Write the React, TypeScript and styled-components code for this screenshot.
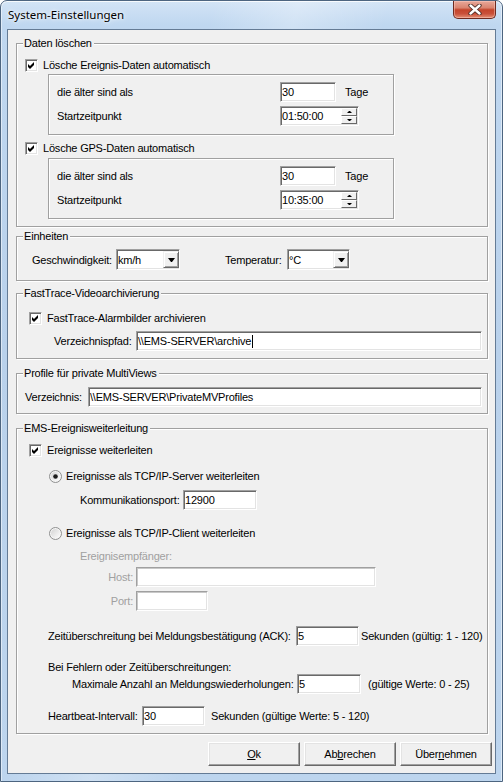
import React from 'react'
import styled, { createGlobalStyle } from 'styled-components'

const GlobalStyle = createGlobalStyle`
  html, body {
    margin: 0;
    padding: 0;
  }
  body {
    width: 503px;
    height: 782px;
    overflow: hidden;
    background: #fff;
  }
`

const Window = styled.div`
  width: 503px;
  height: 782px;
  box-sizing: border-box;
  display: flex;
  flex-direction: column;
  border: 1px solid #4d6580;
  border-radius: 7px 7px 0 0;
  background:
    linear-gradient(105deg, rgba(255, 255, 255, 0) 30%, rgba(255, 255, 255, 0.28) 42%, rgba(255, 255, 255, 0) 55%),
    linear-gradient(180deg, #d3e4f6 0px, #bfd7f0 24px, #b9d1eb 45%, #bdd5ee 100%);
  box-shadow: inset 0 1px 0 rgba(255, 255, 255, 0.8), inset 1px 0 0 rgba(255, 255, 255, 0.5),
    inset -1px 0 0 rgba(255, 255, 255, 0.5);
  font-family: 'Liberation Sans', Arial, sans-serif;
  font-size: 11px;
  letter-spacing: -0.2px;
  color: #000;
`

const TitleBar = styled.div`
  height: 28px;
  flex: none;
  display: flex;
  justify-content: space-between;
  padding: 0 6px 0 7px;
`

const Title = styled.div`
  font-family: 'Noto Sans', 'Open Sans', sans-serif;
  font-size: 11.5px;
  letter-spacing: 0;
  line-height: 28px;
  text-shadow: 0 0 6px rgba(255, 255, 255, 0.9), 0 0 3px rgba(255, 255, 255, 0.9);
`

const CloseButton = styled.div`
  width: 43px;
  height: 18px;
  box-sizing: border-box;
  display: flex;
  align-items: center;
  justify-content: center;
  border: 1px solid #6e2a20;
  border-top: none;
  border-radius: 0 0 5px 5px;
  background: linear-gradient(180deg, #e8a89a 0%, #d98470 40%, #c4442b 52%, #c9503a 75%, #e38f75 100%);
  box-shadow: inset 0 0 0 1px rgba(255, 210, 200, 0.45);
`

const Client = styled.div`
  flex: 1;
  margin: 0 6px 7px;
  border: 1px solid #647b95;
  background: #f0f0f0;
  display: flex;
  flex-direction: column;
`

const Group = styled.div<{ $top: number; $h: number }>`
  position: relative;
  box-sizing: border-box;
  height: ${(p) => p.$h}px;
  margin: ${(p) => p.$top}px 7px 0 8px;
  border: 1px solid #a0a0a0;
  box-shadow: inset 1px 1px 0 #fff, 1px 1px 0 #fff;
  display: flex;
  flex-direction: column;
`

const Legend = styled.span`
  position: absolute;
  top: -7px;
  left: 6px;
  padding: 0 2px 0 1px;
  line-height: 13px;
  background: #f0f0f0;
`

const Body = styled.div<{ $pad: string }>`
  padding: ${(p) => p.$pad};
  display: flex;
  flex-direction: column;
`

const Row = styled.div<{ $top?: number; $indent?: number; $h?: number }>`
  display: flex;
  align-items: center;
  height: ${(p) => p.$h ?? 20}px;
  margin-top: ${(p) => p.$top ?? 0}px;
  padding-left: ${(p) => p.$indent ?? 0}px;
  white-space: nowrap;
`

const Label = styled.span<{ $w?: number; $gap?: number; $right?: boolean; $dim?: boolean }>`
  flex: none;
  width: ${(p) => (p.$w ? `${p.$w}px` : 'auto')};
  margin-left: ${(p) => p.$gap ?? 0}px;
  text-align: ${(p) => (p.$right ? 'right' : 'left')};
  padding-right: ${(p) => (p.$right ? 3 : 0)}px;
  box-sizing: border-box;
  color: ${(p) => (p.$dim ? '#a0a0a0' : '#000')};
`

const Note = styled.span<{ $gap: number }>`
  margin-left: ${(p) => p.$gap}px;
`

const InnerBox = styled.div<{ $top: number }>`
  box-sizing: border-box;
  width: 346px;
  height: 61px;
  margin: ${(p) => p.$top}px 0 0 23px;
  padding: 7px 0 0 8px;
  border: 1px solid #a0a0a0;
  box-shadow: inset 1px 1px 0 #fff, 1px 1px 0 #fff;
  display: grid;
  grid-template-columns: 223px auto;
  grid-auto-rows: 20px;
  row-gap: 4px;
  align-items: center;
  justify-content: start;
`

const Field = styled.div<{ $w?: number; $h?: number; $off?: boolean }>`
  box-sizing: border-box;
  flex: ${(p) => (p.$w ? 'none' : '1')};
  width: ${(p) => (p.$w ? `${p.$w}px` : 'auto')};
  height: ${(p) => p.$h ?? 20}px;
  display: flex;
  align-items: center;
  padding-left: 1px;
  background: #fff;
  border: 1px solid;
  border-color: #a0a0a0 #fff #fff #a0a0a0;
  box-shadow: inset 1px 1px 0 ${(p) => (p.$off ? '#c8c8c8' : '#696969')}, inset -1px -1px 0 #e3e3e3;
  overflow: hidden;
  white-space: nowrap;
`

const FieldText = styled.span`
  flex: 1;
`

const Caret = styled.span`
  display: inline-block;
  width: 1px;
  height: 13px;
  margin-left: 1px;
  background: #000;
  vertical-align: middle;
`

const SpinStack = styled.div`
  display: flex;
  flex-direction: column;
  margin-right: 1px;
`

const SpinButton = styled.div<{ $down?: boolean }>`
  box-sizing: border-box;
  width: 16px;
  height: 8px;
  display: flex;
  align-items: center;
  justify-content: center;
  background: #f0f0f0;
  border: 1px solid;
  border-color: #fff #696969 #696969 #fff;
  &::after {
    content: '';
    width: 1px;
    height: 0;
    border-left: 2px solid transparent;
    border-right: 2px solid transparent;
    ${(p) => (p.$down ? 'border-top: 2px solid #000;' : 'border-bottom: 2px solid #000;')}
  }
`

const DropButton = styled.div`
  box-sizing: border-box;
  flex: none;
  width: 16px;
  height: 17px;
  display: flex;
  align-items: center;
  justify-content: center;
  background: #f0f0f0;
  border: 1px solid;
  border-color: #f0f0f0 #696969 #696969 #f0f0f0;
  box-shadow: inset 1px 1px 0 #fff, inset -1px -1px 0 #a0a0a0;
  &::after {
    content: '';
    width: 1px;
    height: 0;
    margin-top: 1px;
    border-left: 3px solid transparent;
    border-right: 3px solid transparent;
    border-top: 4px solid #000;
  }
`

const CheckBox = styled.span`
  box-sizing: border-box;
  flex: none;
  width: 13px;
  height: 13px;
  display: flex;
  align-items: center;
  justify-content: center;
  background: #fff;
  border: 1px solid;
  border-color: #a0a0a0 #fff #fff #a0a0a0;
  box-shadow: inset 1px 1px 0 #696969, inset -1px -1px 0 #e3e3e3;
  margin-right: 5px;
`

const RadioMark = styled.svg`
  flex: none;
  margin-right: 4px;
`

const ButtonBar = styled.div`
  display: flex;
  justify-content: flex-end;
  gap: 4px;
  margin-top: 8px;
  padding-right: 3px;
`

const PushButton = styled.div`
  box-sizing: border-box;
  width: 92px;
  height: 24px;
  display: flex;
  align-items: center;
  justify-content: center;
  background: #f0f0f0;
  border: 1px solid;
  border-color: #fff #696969 #696969 #fff;
  box-shadow: inset -1px -1px 0 #a0a0a0, inset 1px 1px 0 #e3e3e3;
`

const Check = ({ children }: { children: React.ReactNode }) => (
  <>
    <CheckBox>
      <svg width="7" height="7" viewBox="0 0 7 7">
        <path d="M0 2 L2 4 L6 0 L6 3 L2 7 L0 5 Z" fill="#000" />
      </svg>
    </CheckBox>
    <span>{children}</span>
  </>
)

const Radio = ({ on, children }: { on?: boolean; children: React.ReactNode }) => (
  <>
    <RadioMark width="13" height="13" viewBox="0 0 13 13">
      <defs>
        <linearGradient id="rg" x1="0" y1="0" x2="1" y2="1">
          <stop offset="0" stopColor="#d4d4d4" />
          <stop offset="1" stopColor="#fdfdfd" />
        </linearGradient>
      </defs>
      <circle cx="6.5" cy="6.5" r="6" fill="#f6f6f6" stroke="#8e8f8f" strokeWidth="1" />
      <circle cx="6.5" cy="6.5" r="4.5" fill="url(#rg)" />
      {on && <circle cx="6.5" cy="6.5" r="2.3" fill="#1c1c1c" />}
    </RadioMark>
    <span>{children}</span>
  </>
)

const Spinner = ({ value }: { value: string }) => (
  <Field $w={79}>
    <FieldText>{value}</FieldText>
    <SpinStack>
      <SpinButton />
      <SpinButton $down />
    </SpinStack>
  </Field>
)

const Combo = ({ value, w }: { value: string; w: number }) => (
  <Field $w={w} $h={21}>
    <FieldText>{value}</FieldText>
    <DropButton />
  </Field>
)

export default function App() {
  return (
    <>
      <GlobalStyle />
      <Window>
        <TitleBar>
          <Title>System-Einstellungen</Title>
          <CloseButton>
            <svg width="14" height="11" viewBox="0 0 14 11">
              <path d="M2.5 1.5 L11.5 9.5 M11.5 1.5 L2.5 9.5" stroke="#4a2a24" strokeWidth="4.2" strokeLinecap="round" />
              <path d="M2.5 1.5 L11.5 9.5 M11.5 1.5 L2.5 9.5" stroke="#fff" strokeWidth="2.4" strokeLinecap="round" />
            </svg>
          </CloseButton>
        </TitleBar>

        <Client>
          <Group $top={13} $h={184}>
            <Legend>Daten löschen</Legend>
            <Body $pad="13px 0 0 8px">
              <Row $h={16}>
                <Check>Lösche Ereignis-Daten automatisch</Check>
              </Row>
              <InnerBox $top={1}>
                <Label>die älter sind als</Label>
                <Row>
                  <Field $w={56}>30</Field>
                  <Note $gap={9}>Tage</Note>
                </Row>
                <Label>Startzeitpunkt</Label>
                <Spinner value="01:50:00" />
              </InnerBox>
              <Row $h={16} $top={5}>
                <Check>Lösche GPS-Daten automatisch</Check>
              </Row>
              <InnerBox $top={2}>
                <Label>die älter sind als</Label>
                <Row>
                  <Field $w={56}>30</Field>
                  <Note $gap={9}>Tage</Note>
                </Row>
                <Label>Startzeitpunkt</Label>
                <Spinner value="10:35:00" />
              </InnerBox>
            </Body>
          </Group>

          <Group $top={9} $h={45}>
            <Legend>Einheiten</Legend>
            <Body $pad="12px 0 0 15px">
              <Row $h={21}>
                <Label $w={84}>Geschwindigkeit:</Label>
                <Combo value="km/h" w={64} />
                <Label $w={62} $gap={45}>
                  Temperatur:
                </Label>
                <Combo value="°C" w={63} />
              </Row>
            </Body>
          </Group>

          <Group $top={12} $h={66}>
            <Legend>FastTrace-Videoarchivierung</Legend>
            <Body $pad="17px 5px 0 12px">
              <Row $h={14}>
                <Check>FastTrace-Alarmbilder archivieren</Check>
              </Row>
              <Row $top={6} $indent={25}>
                <Label $w={82}>Verzeichnispfad:</Label>
                <Field>
                  {'\\\\EMS-SERVER\\archive'}
                  <Caret />
                </Field>
              </Row>
            </Body>
          </Group>

          <Group $top={14} $h={41}>
            <Legend>Profile für private MultiViews</Legend>
            <Body $pad="13px 5px 0 8px">
              <Row>
                <Label $w={63}>Verzeichnis:</Label>
                <Field>{'\\\\EMS-SERVER\\PrivateMVProfiles'}</Field>
              </Row>
            </Body>
          </Group>

          <Group $top={14} $h={306}>
            <Legend>EMS-Ereignisweiterleitung</Legend>
            <Body $pad="11px 0 0 0">
              <Row $indent={12}>
                <Check>Ereignisse weiterleiten</Check>
              </Row>
              <Row $top={6} $indent={32}>
                <Radio on>Ereignisse als TCP/IP-Server weiterleiten</Radio>
              </Row>
              <Row $top={4} $indent={63}>
                <Label $w={103}>Kommunikationsport:</Label>
                <Field $w={74}>12900</Field>
              </Row>
              <Row $top={13} $indent={32}>
                <Radio>Ereignisse als TCP/IP-Client weiterleiten</Radio>
              </Row>
              <Row $top={3} $indent={63}>
                <Label $dim>Ereignisempfänger:</Label>
              </Row>
              <Row $top={1} $indent={63}>
                <Label $w={56} $right $dim>
                  Host:
                </Label>
                <Field $w={240} $off />
              </Row>
              <Row $top={4} $indent={63}>
                <Label $w={56} $right $dim>
                  Port:
                </Label>
                <Field $w={72} $off />
              </Row>
              <Row $top={15} $indent={31}>
                <Label $w={248}>Zeitüberschreitung bei Meldungsbestätigung (ACK):</Label>
                <Field $w={63}>5</Field>
                <Note $gap={2}>Sekunden (gültig: 1 - 120)</Note>
              </Row>
              <Row $top={14} $indent={31} $h={14}>
                <Label>Bei Fehlern oder Zeitüberschreitungen:</Label>
              </Row>
              <Row $indent={55}>
                <Label $w={225}>Maximale Anzahl an Meldungswiederholungen:</Label>
                <Field $w={64}>5</Field>
                <Note $gap={7}>(gültige Werte: 0 - 25)</Note>
              </Row>
              <Row $top={12} $indent={31}>
                <Label $w={94}>Heartbeat-Intervall:</Label>
                <Field $w={63}>30</Field>
                <Note $gap={6}>Sekunden (gültige Werte: 5 - 120)</Note>
              </Row>
            </Body>
          </Group>

          <ButtonBar>
            <PushButton>
              <span>
                <u>O</u>k
              </span>
            </PushButton>
            <PushButton>
              <span>
                Ab<u>b</u>rechen
              </span>
            </PushButton>
            <PushButton>
              <span>
                Über<u>n</u>ehmen
              </span>
            </PushButton>
          </ButtonBar>
        </Client>
      </Window>
    </>
  )
}
